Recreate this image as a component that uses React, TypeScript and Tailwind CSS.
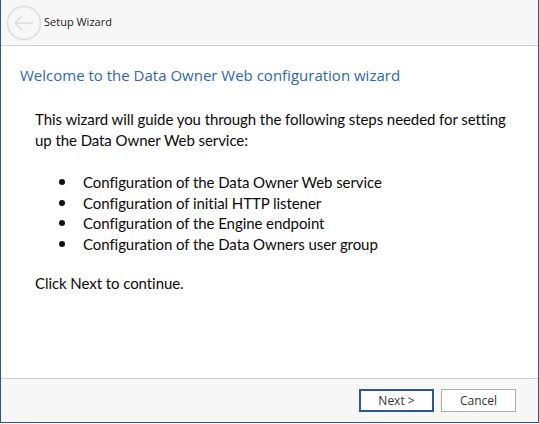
import React from "react";

export default function App() {
  const bullets = [
    "Configuration of the Data Owner Web service",
    "Configuration of initial HTTP listener",
    "Configuration of the Engine endpoint",
    "Configuration of the Data Owners user group",
  ];
  return (
    <div className="w-[539px] h-[424px] bg-white">
      <div className="w-[539px] h-[423px] flex flex-col border-l border-r border-b border-[#2b5797] bg-white">
        <div className="h-[46px] shrink-0 bg-[#f7f7f7] border-b border-[#d3d3d3] flex items-center">
          <svg width="36" height="36" viewBox="0 0 36 36" className="ml-[5px]">
            <circle cx="18" cy="18" r="16.5" fill="none" stroke="#dcdcdc" strokeWidth="1.5" />
            <path d="M9 18 H27 M9 18 L16 11 M9 18 L16 25" fill="none" stroke="#dcdcdc" strokeWidth="1.5" />
          </svg>
          <span className="ml-[2px] text-[11px] text-[#222] font-['Open_Sans',sans-serif]">Setup Wizard</span>
        </div>
        <div className="flex-1 flex flex-col pl-[19px] pt-[17px]">
          <div className="text-[15px] text-[#2e67b1] font-['Open_Sans',sans-serif] leading-[24px]">
            Welcome to the Data Owner Web configuration wizard
          </div>
          <div className="pl-[15px] pt-[22px] text-[15px] tracking-[-0.07px] text-[#0a0a0a] font-['Lato',sans-serif] leading-[21px]">
            <p className="w-[480px]">This wizard will guide you through the following steps needed for setting up the Data Owner Web service:</p>
            <ul className="mt-[21px] flex flex-col">
              {bullets.map((b) => (
                <li key={b} className="flex items-center leading-[20.5px]">
                  <span className="ml-[24px] w-[6px] h-[6px] rounded-full bg-[#111]" />
                  <span className="ml-[18px]">{b}</span>
                </li>
              ))}
            </ul>
            <p className="mt-[19px]">Click Next to continue.</p>
          </div>
        </div>
        <div className="h-[44px] shrink-0 bg-[#f7f7f7] border-t border-[#cfcfcf] flex items-center justify-end pr-[22px] gap-[7px]">
          <button className="w-[75px] h-[23px] border-2 border-[#2b579a] bg-white text-[12px] text-[#333] font-['Open_Sans',sans-serif] flex items-center justify-center">
            Next &gt;
          </button>
          <button className="w-[75px] h-[23px] border border-[#adadad] bg-white text-[12px] text-[#333] font-['Open_Sans',sans-serif] flex items-center justify-center">
            Cancel
          </button>
        </div>
      </div>
    </div>
  );
}
